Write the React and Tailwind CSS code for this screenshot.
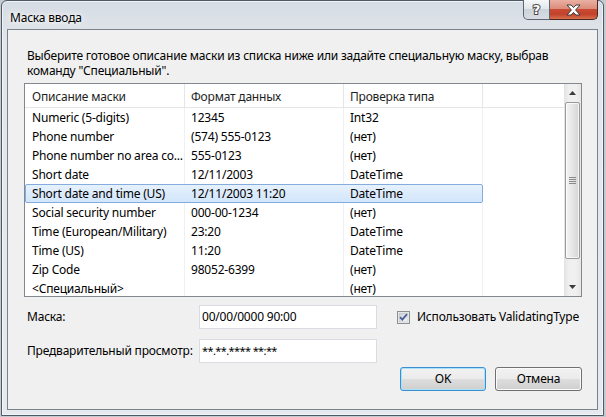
const rows = [
  ["Numeric (5-digits)", "12345", "Int32"],
  ["Phone number", "(574) 555-0123", "(нет)"],
  ["Phone number no area co...", "555-0123", "(нет)"],
  ["Short date", "12/11/2003", "DateTime"],
  ["Short date and time (US)", "12/11/2003 11:20", "DateTime"],
  ["Social security number", "000-00-1234", "(нет)"],
  ["Time (European/Military)", "23:20", "DateTime"],
  ["Time (US)", "11:20", "DateTime"],
  ["Zip Code", "98052-6399", "(нет)"],
  ["<Специальный>", "", "(нет)"],
];

const SELECTED = 4;

function Row({ cells, selected }) {
  if (selected) {
    return (
      <div className="flex h-[19px] shrink-0">
        <div className="flex w-[458px] rounded-[2px] border border-[#84acdd] bg-[linear-gradient(#e6f1fd,#d2e6fb)]">
          <div className="w-[159px] pl-[6px] leading-[18px] whitespace-nowrap">{cells[0]}</div>
          <div className="w-[159px] pl-[6px] leading-[18px] whitespace-nowrap">{cells[1]}</div>
          <div className="w-[138px] pl-[6px] leading-[18px] whitespace-nowrap">{cells[2]}</div>
        </div>
        <div className="w-[81px]" />
      </div>
    );
  }
  return (
    <div className="flex h-[19px] shrink-0 leading-[20px]">
      <div className="w-[160px] pl-[7px] border-r border-[#edf1f6] whitespace-nowrap overflow-hidden">{cells[0]}</div>
      <div className="w-[159px] pl-[6px] border-r border-[#edf1f6] whitespace-nowrap">{cells[1]}</div>
      <div className="w-[139px] pl-[6px] border-r border-[#edf1f6] whitespace-nowrap">{cells[2]}</div>
      <div className="w-[81px]" />
    </div>
  );
}

function Arrow({ down }) {
  return (
    <svg width="7" height="4" viewBox="0 0 7 4">
      <path d={down ? "M0 0H7L3.5 4Z" : "M0 4H7L3.5 0Z"} fill="#3b3b3b" />
    </svg>
  );
}

function ScrollBar() {
  return (
    <div className="w-[17px] flex flex-col bg-[linear-gradient(90deg,#e3e3e3,#f0f0f0_30%,#f0f0f0_70%,#e6e6e6)]">
      <div className="h-[18px] flex items-center justify-center">
        <Arrow />
      </div>
      <div className="mx-[1px] h-[157px] rounded-[2px] border border-[#9a9a9a] bg-[linear-gradient(90deg,#f4f4f4,#e6e6e6_50%,#d4d4d4)] shadow-[inset_0_0_0_1px_rgba(255,255,255,0.7)] flex items-center justify-center">
        <div className="flex flex-col gap-[1px]">
          <div className="w-[7px] h-[1px] bg-[#8a8a8a]" />
          <div className="w-[7px] h-[1px] bg-[#8a8a8a]" />
          <div className="w-[7px] h-[1px] bg-[#8a8a8a]" />
          <div className="w-[7px] h-[1px] bg-[#8a8a8a]" />
        </div>
      </div>
      <div className="flex-1" />
      <div className="h-[18px] flex items-center justify-center">
        <Arrow down />
      </div>
    </div>
  );
}

function ListView() {
  return (
    <div className="ml-[16px] mt-[5px] w-[558px] h-[214px] border border-[#828790] bg-white flex overflow-hidden">
      <div className="w-[539px] flex flex-col">
        <div className="flex h-[24px] shrink-0 border-b border-[#e5e5e5] leading-[25px] text-[#1e1e1e]">
          <div className="w-[160px] pl-[7px] border-r border-[#e5e5e5]">Описание маски</div>
          <div className="w-[159px] pl-[6px] border-r border-[#e5e5e5]">Формат данных</div>
          <div className="w-[139px] pl-[6px] border-r border-[#e5e5e5]">Проверка типа</div>
          <div className="w-[81px]" />
        </div>
        {rows.map((r, i) => (
          <Row key={i} cells={r} selected={i === SELECTED} />
        ))}
      </div>
      <ScrollBar />
    </div>
  );
}

function CheckBox() {
  return (
    <svg width="13" height="13" viewBox="0 0 13 13">
      <defs>
        <linearGradient id="cb" x1="0" y1="0" x2="1" y2="1">
          <stop offset="0" stopColor="#cbcfd5" />
          <stop offset="1" stopColor="#f6f6f6" />
        </linearGradient>
      </defs>
      <rect x="0.5" y="0.5" width="12" height="12" fill="#f4f4f4" stroke="#8e8f8f" />
      <rect x="2" y="2" width="9" height="9" fill="url(#cb)" stroke="#aeb3b9" strokeWidth="0.5" />
      <path d="M3 6.2L5.3 8.7L10 3.2" fill="none" stroke="#4a5f97" strokeWidth="1.8" />
    </svg>
  );
}

function Button({ children, primary }) {
  return (
    <div
      className={
        "h-[24px] rounded-[3px] border flex items-center justify-center bg-[linear-gradient(#f2f2f2,#ebebeb_48%,#dddddd_52%,#cfcfcf)] " +
        (primary
          ? "w-[86px] border-[#3c8fcf] shadow-[inset_0_0_0_1px_#a6e3fb]"
          : "w-[87px] border-[#707070] shadow-[inset_0_0_0_1px_#fbfbfb]")
      }
    >
      {children}
    </div>
  );
}

export default function App() {
  return (
    <div className="w-[606px] h-[417px] bg-[#c5cad0] pl-[1px] overflow-hidden font-['Segoe_UI','Noto_Sans',sans-serif] text-[12px] tracking-[-0.2px] text-black">
      <div className="w-[603px] h-[416px] flex flex-col rounded-t-[6px] border border-[#4e5966] bg-[linear-gradient(180deg,#d6dce4,#e2e6eb_10%,#e6e9ed)] shadow-[inset_0_0_0_1px_rgba(255,255,255,0.6)]">
        {/* title bar */}
        <div className="h-[28px] shrink-0 flex justify-between items-start">
          <div className="pl-[8px] pt-[9px] leading-[15px] [text-shadow:0_0_8px_#ffffff,0_0_4px_#ffffff]">Маска ввода</div>
          <div className="flex -mt-[1px] mr-[5px]">
            <div className="w-[27px] h-[20px] rounded-bl-[5px] border border-t-0 border-[#5c6570] bg-[linear-gradient(#f5f7f9,#e3e7ec_45%,#cdd3da_50%,#d8dde3)] flex items-center justify-center">
              <span className="font-['DejaVu_Sans',sans-serif] font-bold text-[13px] leading-none text-white [-webkit-text-stroke:2px_#4a4a4a] [paint-order:stroke_fill]">?</span>
            </div>
            <div className="w-[48px] h-[20px] rounded-br-[5px] border border-l-0 border-t-0 border-[#4a2521] bg-[linear-gradient(#eab0a2,#dc8d7b_45%,#c84a33_50%,#c2422a_75%,#d7714f)] flex items-center justify-center">
              <svg width="15" height="12" viewBox="0 0 15 12">
                <path
                  d="M1 1H5L7.5 3.6L10 1H14L9.6 6L14 11H10L7.5 8.4L5 11H1L5.4 6Z"
                  fill="#ffffff"
                  stroke="#3d3d3d"
                  strokeWidth="1"
                  strokeLinejoin="round"
                />
              </svg>
            </div>
          </div>
        </div>
        {/* client area */}
        <div className="mx-[5px] h-[381px] shrink-0 border border-[#7a828c] bg-[#f0f0f0] flex flex-col">
          <div className="pl-[19px] pt-[18px] leading-[15px]">
            <div className="whitespace-nowrap">
              Выберите готовое описание маски из списка ниже или задайте специальную маску, выбрав
            </div>
            <div className="whitespace-nowrap">команду "Специальный".</div>
          </div>
          <ListView />
          <div className="mt-[8px] h-[24px] flex items-center pl-[19px]">
            <div className="w-[172px]">Маска:</div>
            <div className="w-[178px] h-[24px] border border-[#d9dce3] bg-white pl-[2px] leading-[22px]">00/00/0000 90:00</div>
            <div className="ml-[20px] flex items-center">
              <CheckBox />
              <span className="ml-[7px]">Использовать ValidatingType</span>
            </div>
          </div>
          <div className="mt-[10px] h-[24px] flex items-center pl-[19px]">
            <div className="w-[172px]">Предварительный просмотр:</div>
            <div className="w-[178px] h-[24px] border border-[#d9dce3] bg-white pl-[2px] leading-[22px] text-[11px] tracking-[-0.6px]">**.**.**** **:**</div>
          </div>
          <div className="mt-[4px] flex justify-end gap-[9px] pr-[15px]">
            <Button primary>OK</Button>
            <Button>Отмена</Button>
          </div>
        </div>
      </div>
    </div>
  );
}
